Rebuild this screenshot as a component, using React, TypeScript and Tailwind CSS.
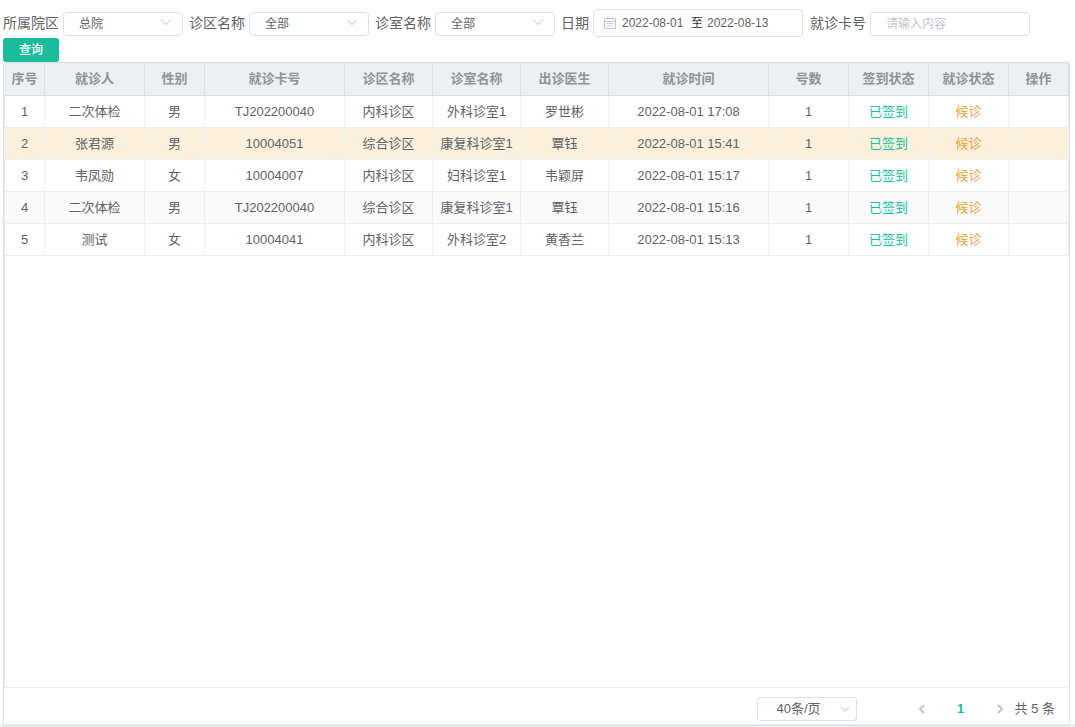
import { useState, type ReactNode } from "react";
import clsx from "clsx";

interface Visit {
  id: number;
  patient: string;
  gender: string;
  cardNo: string;
  area: string;
  room: string;
  doctor: string;
  time: string;
  count: number;
  signStatus: string;
  visitStatus: string;
}

const visits: Visit[] = [
  { id: 1, patient: "二次体检", gender: "男", cardNo: "TJ202200040", area: "内科诊区", room: "外科诊室1", doctor: "罗世彬", time: "2022-08-01 17:08", count: 1, signStatus: "已签到", visitStatus: "候诊" },
  { id: 2, patient: "张君源", gender: "男", cardNo: "10004051", area: "综合诊区", room: "康复科诊室1", doctor: "覃钰", time: "2022-08-01 15:41", count: 1, signStatus: "已签到", visitStatus: "候诊" },
  { id: 3, patient: "韦凤勋", gender: "女", cardNo: "10004007", area: "内科诊区", room: "妇科诊室1", doctor: "韦颖屏", time: "2022-08-01 15:17", count: 1, signStatus: "已签到", visitStatus: "候诊" },
  { id: 4, patient: "二次体检", gender: "男", cardNo: "TJ202200040", area: "综合诊区", room: "康复科诊室1", doctor: "覃钰", time: "2022-08-01 15:16", count: 1, signStatus: "已签到", visitStatus: "候诊" },
  { id: 5, patient: "测试", gender: "女", cardNo: "10004041", area: "内科诊区", room: "外科诊室2", doctor: "黄香兰", time: "2022-08-01 15:13", count: 1, signStatus: "已签到", visitStatus: "候诊" },
];

const columns = [
  { title: "序号", width: "w-[40px]" },
  { title: "就诊人", width: "w-[100px]" },
  { title: "性别", width: "w-[60px]" },
  { title: "就诊卡号", width: "w-[140px]" },
  { title: "诊区名称", width: "w-[88px]" },
  { title: "诊室名称", width: "w-[88px]" },
  { title: "出诊医生", width: "w-[88px]" },
  { title: "就诊时间", width: "w-[160px]" },
  { title: "号数", width: "w-[80px]" },
  { title: "签到状态", width: "w-[80px]" },
  { title: "就诊状态", width: "w-[80px]" },
  { title: "操作", width: "w-[60px]" },
];

function Arrow({ className, d = "M1 3.5 6 8.5 11 3.5" }: { className?: string; d?: string }) {
  return (
    <svg viewBox="0 0 12 12" fill="none" stroke="currentColor" className={className} aria-hidden="true">
      <path d={d} />
    </svg>
  );
}

function CalendarIcon() {
  return (
    <svg viewBox="0 0 14 14" fill="none" stroke="#c0c4cc" className="size-[14px] shrink-0" aria-hidden="true">
      <path d="M1.5 2.5h11v10h-11zM1.5 5.5h11M4.5 1v2M9.5 1v2" />
      <path d="M3.5 7.5h2M6 7.5h2M8.5 7.5h2M3.5 10h2M6 10h2M8.5 10h2" />
    </svg>
  );
}

function Field({ id, label, children }: { id: string; label: string; children: ReactNode }) {
  return (
    <div className="flex items-center gap-1">
      <label htmlFor={id} className="text-sm">
        {label}
      </label>
      {children}
    </div>
  );
}

function FilterSelect({ id, label, option }: { id: string; label: string; option: string }) {
  return (
    <Field id={id} label={label}>
      <div className="relative pt-0.5">
        <select
          id={id}
          className="block h-6 w-[120px] appearance-none rounded border border-[#dcdfe6] bg-white pl-[15px] text-xs outline-none"
        >
          <option>{option}</option>
        </select>
        <Arrow className="pointer-events-none absolute top-1.5 right-[11px] size-3 text-[#b4bccc]" />
      </div>
    </Field>
  );
}

export default function App() {
  const [start, setStart] = useState("2022-08-01");
  const [end, setEnd] = useState("2022-08-13");
  const [cardNo, setCardNo] = useState("");
  const [current, setCurrent] = useState(2);

  return (
    <div className="flex h-screen flex-col bg-white pt-[9px] pr-[5px] pl-[3px] font-['Liberation_Sans','Noto_Sans_CJK_SC',sans-serif] text-[#606266]">
      {/* Filters */}
      <form className="flex flex-wrap items-center gap-x-[6px] gap-y-px" onSubmit={(e) => e.preventDefault()}>
        <FilterSelect id="campus" label="所属院区" option="总院" />
        <FilterSelect id="area" label="诊区名称" option="全部" />
        <FilterSelect id="room" label="诊室名称" option="全部" />
        <Field id="start" label="日期">
          <div className="flex h-7 w-[210px] items-center rounded border border-[#dcdfe6] pl-[9px] text-xs">
            <CalendarIcon />
            <input
              id="start"
              className="ml-[5px] w-[65px] outline-none"
              value={start}
              onChange={(e) => setStart(e.target.value)}
            />
            <span className="px-1 text-[#303133]">至</span>
            <input
              aria-label="结束日期"
              className="w-[65px] outline-none"
              value={end}
              onChange={(e) => setEnd(e.target.value)}
            />
          </div>
        </Field>
        <div className="pl-px">
          <Field id="card" label="就诊卡号">
            <div className="pt-0.5">
              <input
                id="card"
                className="block h-6 w-[160px] rounded border border-[#dcdfe6] px-[15px] text-xs outline-none placeholder:text-[#c0c4cc]"
                placeholder="请输入内容"
                value={cardNo}
                onChange={(e) => setCardNo(e.target.value)}
              />
            </div>
          </Field>
        </div>
        <div className="w-full">
          <button type="submit" className="block h-6 rounded-[3px] bg-[#1abc9c] px-4 text-xs font-medium text-white">
            查询
          </button>
        </div>
      </form>

      {/* Queue table */}
      <div className="flex min-h-0 flex-1 flex-col rounded-t-[2px] border border-b-0 border-[#dcdfe2]">
        <div className="min-h-0 flex-1 overflow-hidden border-b border-l border-[#ebeef5]">
          <table className="w-full table-fixed border-separate border-spacing-0 text-center text-[13px] leading-5">
            <thead className="bg-[#ecf0f1] text-[#909399]">
              <tr>
                {columns.map((col) => (
                  <th key={col.title} className={clsx(col.width, "h-[33px] border-r border-b border-[#dcdfe2] p-0 font-bold")}>
                    {col.title}
                  </th>
                ))}
              </tr>
            </thead>
            <tbody>
              {visits.map((row) => (
                <tr
                  key={row.id}
                  onClick={() => setCurrent(row.id)}
                  className={clsx(
                    "*:h-8 *:border-r *:border-b *:border-[#ebeef5] *:p-0 *:whitespace-nowrap",
                    row.id === current ? "bg-[#faf0dc]" : row.id % 2 === 0 && "bg-[#fafafa]"
                  )}
                >
                  <td>{row.id}</td>
                  <td>{row.patient}</td>
                  <td>{row.gender}</td>
                  <td>{row.cardNo}</td>
                  <td>{row.area}</td>
                  <td>{row.room}</td>
                  <td>{row.doctor}</td>
                  <td>{row.time}</td>
                  <td>{row.count}</td>
                  <td className="text-[#1abc9c]">{row.signStatus}</td>
                  <td className="text-[#e6a23c]">{row.visitStatus}</td>
                  <td></td>
                </tr>
              ))}
            </tbody>
          </table>
        </div>

        {/* Pagination */}
        <div className="flex h-9 shrink-0 items-center justify-end pt-1.5 pr-[14px] text-[13px]">
          <div className="relative">
            <select
              aria-label="每页条数"
              className="block h-6 w-[100px] appearance-none rounded-[3px] border border-[#dcdfe6] bg-white pl-[19px] text-[13px] outline-none"
            >
              <option>40条/页</option>
            </select>
            <Arrow className="pointer-events-none absolute top-[7px] right-[7px] size-[10px] text-[#b4bccc]" />
          </div>
          <button type="button" aria-label="上一页" className="ml-[59px] text-[#c0c4cc]">
            <Arrow className="size-3 stroke-2" d="M8 2 4 6 8 10" />
          </button>
          <button type="button" className="w-[66px] text-center font-bold text-[#1abc9c]">
            1
          </button>
          <button type="button" aria-label="下一页" className="mr-[9px] text-[#c0c4cc]">
            <Arrow className="size-3 stroke-2" d="M4 2 8 6 4 10" />
          </button>
          <span>共 5 条</span>
        </div>
      </div>
      <div className="-mr-[5px] -ml-[3px] h-[3px] shrink-0 bg-[#ecf0f1]">
        <div className="mr-[5px] ml-[3px] h-[2px] border-b border-[#dcdfe2]" />
      </div>
    </div>
  );
}
